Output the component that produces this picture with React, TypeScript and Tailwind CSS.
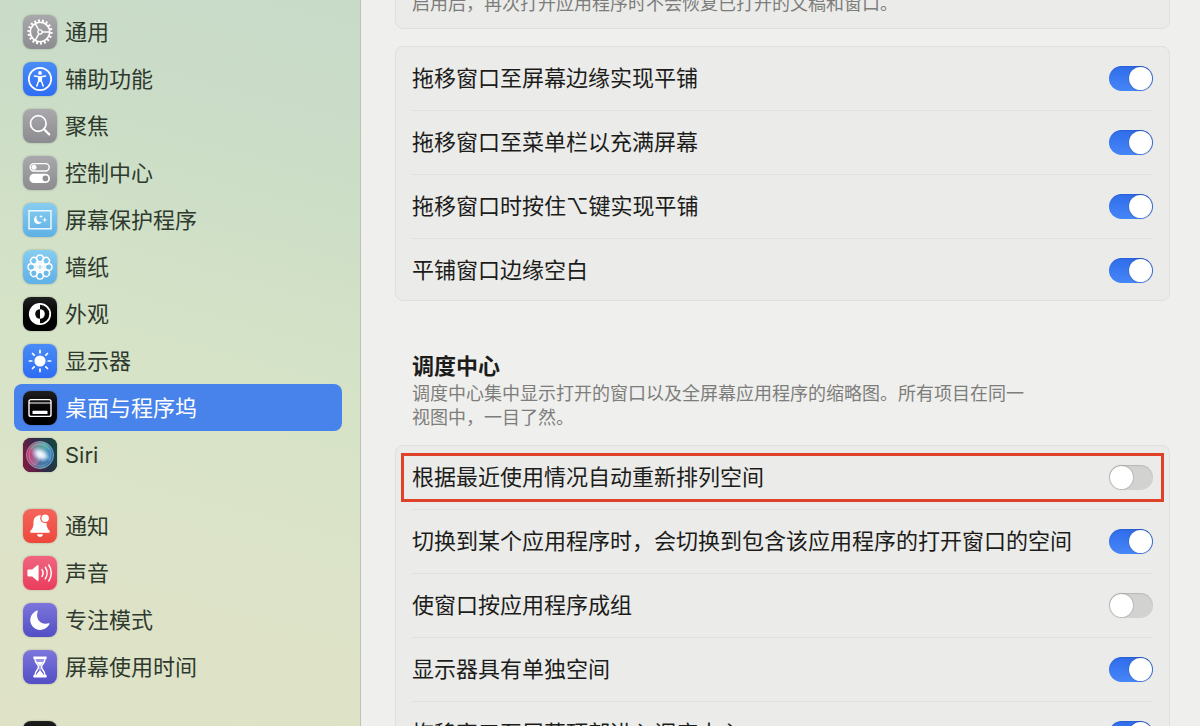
import { useState } from "react";
import type { ReactNode } from "react";

interface SidebarItem {
  label: string;
  tile: string;
  icon: ReactNode;
}

interface SettingRow {
  label: string;
  on: boolean;
  marked?: boolean;
}

/* =====================================
    Icons (drawn on a 34 x 34 tile)
===================================== */

const gear = (
  <g fill="none" stroke="#fff">
    <circle cx="17" cy="17" r="11.4" strokeWidth="2.4" pathLength="36" strokeDasharray="1 1" />
    <circle cx="17" cy="17" r="9.7" strokeWidth="1.6" />
    <circle cx="17" cy="17" r="2.1" strokeWidth="1.3" />
    <path d="M19.1 17H26.5M15.9 15.2L12.2 8.7M15.9 18.8L12.2 25.3" strokeWidth="1.5" />
  </g>
);

const accessibility = (
  <g>
    <circle cx="17" cy="17" r="11.2" fill="none" stroke="#fff" strokeWidth="1.7" />
    <circle cx="17" cy="11" r="1.9" fill="#fff" />
    <path
      d="M11.5 14.1L15.8 14.7V18.4L13.8 24M22.5 14.1L18.2 14.7V18.4L20.2 24"
      fill="none"
      stroke="#fff"
      strokeWidth="1.5"
      strokeLinecap="round"
      strokeLinejoin="round"
    />
    <path d="M15.2 14.2h3.6v5.6h-3.6z" fill="#fff" />
  </g>
);

const search = (
  <g fill="none" stroke="#fff" strokeLinecap="round">
    <circle cx="15.3" cy="14.5" r="7.8" strokeWidth="1.7" />
    <path d="M21 20.2L26.2 25.4" strokeWidth="2.3" />
  </g>
);

const controlCenter = (
  <g>
    <rect x="7.2" y="7.6" width="19" height="7.4" rx="3.7" fill="none" stroke="#fff" strokeWidth="1.4" />
    <circle cx="11" cy="11.3" r="2.5" fill="#fff" />
    <rect x="6.4" y="17.8" width="20.6" height="9.2" rx="4.6" fill="#fff" />
    <circle cx="22.4" cy="22.4" r="2.8" fill="#8f8f94" />
  </g>
);

const screenSaver = (
  <g>
    <rect x="6" y="7.8" width="22" height="18" fill="none" stroke="#fff" strokeWidth="1.3" />
    <path d="M14 12.6a4.3 4.3 0 1 0 5 6.2a4.2 4.2 0 0 1-5-6.2z" fill="#fff" />
    <path d="M18 11.6l.5 1.5l1.5.5l-1.5.5l-.5 1.5l-.5-1.5l-1.5-.5l1.5-.5z" fill="#fff" />
    <path d="M21.7 14.2l.7 2l2 .7l-2 .7l-.7 2l-.7-2l-2-.7l2-.7z" fill="#fff" />
  </g>
);

const spokes = [0, 45, 90, 135, 180, 225, 270, 315];

const flower = (
  <g fill="none" stroke="#fff" strokeWidth="1.4">
    {spokes.map((angle) => (
      <g key={angle} transform={`rotate(${angle} 17 17)`}>
        <circle cx="17" cy="8.3" r="3.3" />
        <path d="M15.2 10.9L17 15L18.8 10.9" />
      </g>
    ))}
    <circle cx="17" cy="17" r="3.9" strokeWidth="1" />
  </g>
);

const appearance = (
  <g>
    <circle cx="17" cy="17" r="10.2" fill="none" stroke="#fff" strokeWidth="1.8" />
    <path d="M17 6.5a10.5 10.5 0 0 0 0 21z" fill="#fff" />
    <path d="M17 12.2a4.8 4.8 0 0 0 0 9.6z" fill="#0b0b0b" />
    <path d="M17 12.2a4.8 4.8 0 0 1 0 9.6z" fill="#fff" />
  </g>
);

const sun = (
  <g>
    <circle cx="17" cy="17" r="5.6" fill="#fff" />
    {spokes.map((angle) => (
      <path
        key={angle}
        d="M17 8.8V6.4"
        transform={`rotate(${angle} 17 17)`}
        stroke="#fff"
        strokeWidth="1.7"
        strokeLinecap="round"
      />
    ))}
  </g>
);

const dock = (
  <g>
    <rect x="6" y="8.6" width="22" height="16.8" rx="2" fill="none" stroke="#fff" strokeWidth="1.4" />
    <path d="M6 12H28" stroke="#fff" strokeWidth="1.2" />
    <rect x="9.5" y="19.8" width="15" height="3.2" rx="0.6" fill="#fff" />
  </g>
);

const siri = (
  <g>
    <defs>
      <linearGradient id="siri-bg" x1="0" y1="0.6" x2="1" y2="0.3">
        <stop offset="0" stopColor="#7d1a42" />
        <stop offset="0.5" stopColor="#2f2a4a" />
        <stop offset="1" stopColor="#14473f" />
      </linearGradient>
      <linearGradient id="siri-orb" x1="0" y1="0.5" x2="1" y2="0.6">
        <stop offset="0" stopColor="#cc2f68" />
        <stop offset="0.35" stopColor="#9a6f98" />
        <stop offset="0.65" stopColor="#5aa5b4" />
        <stop offset="1" stopColor="#2d6cb8" />
      </linearGradient>
      <radialGradient id="siri-glow">
        <stop offset="0" stopColor="#fff" />
        <stop offset="0.4" stopColor="#e8f3ff" stopOpacity="0.85" />
        <stop offset="1" stopColor="#bcd7ff" stopOpacity="0" />
      </radialGradient>
    </defs>
    <rect width="34" height="34" fill="url(#siri-bg)" />
    <circle cx="17" cy="17" r="13.6" fill="url(#siri-orb)" stroke="#9dbcc0" strokeOpacity="0.7" strokeWidth="0.9" />
    <path d="M6 11C11 3 23 3 28 12C23 9 18 12 17 17C14 12 10 10 6 11z" fill="#4fb59a" fillOpacity="0.45" />
    <path d="M17 19C22 19 26 21 27 24C23 30 16 31 11 28C15 26 18 23 17 19z" fill="#1f3f8c" fillOpacity="0.4" />
    <circle cx="17" cy="17" r="11" fill="none" stroke="#c9dfe2" strokeOpacity="0.4" strokeWidth="0.8" />
    <ellipse cx="17.6" cy="16.6" rx="10.5" ry="7" fill="url(#siri-glow)" transform="rotate(30 17.6 16.6)" />
  </g>
);

const bell = (
  <g>
    <path
      d="M16.8 6.2c-4.3.3-6.3 3.3-6.3 7.2c0 4.4-1 6.4-3 8.3c-.8.8-.5 2 .7 2h17.6c1.2 0 1.5-1.2.7-2c-2-1.9-3-3.9-3-8.3c0-4-2-6.9-6.7-7.2z"
      fill="#fff"
    />
    <path d="M14 25.3h6c-.3 1.7-1.4 2.7-3 2.7s-2.7-1-3-2.7z" fill="#fff" />
    <circle cx="22.2" cy="9.3" r="5" fill="#f3584f" />
    <circle cx="22.2" cy="9.3" r="3.7" fill="#fff" />
  </g>
);

const speaker = (
  <g>
    <path
      d="M5.6 13.6h3.6l5-4.3c.7-.6 1.4-.3 1.4.6v14.2c0 .9-.7 1.2-1.4.6l-5-4.3H5.6c-.7 0-1.2-.5-1.2-1.2v-4.4c0-.7.5-1.2 1.2-1.2z"
      fill="#fff"
    />
    <path
      d="M19 13.6c1.3 2 1.3 4.8 0 6.8M22.3 11.3c2.3 3.3 2.3 8.1 0 11.4M25.8 9c3.3 4.7 3.3 11.3 0 16"
      fill="none"
      stroke="#fff"
      strokeWidth="1.5"
      strokeLinecap="round"
    />
  </g>
);

const moon = (
  <path
    d="M14 7.6c.5-.4 1 0 .8.6c-2.800 7.600 2.600 14 10.800 12.100c.7-.2 1.100.4.8 1c-3.600 6.600-12.600 7.500-17 1.900c-4-5.200-2.200-12.700 4.600-15.600z"
    fill="#fff"
  />
);

const hourglass = (
  <g>
    <path d="M10.4 6.6h13.2v2.3h-13.2zM10.4 25.1h13.2v2.3h-13.2z" fill="#fff" />
    <path
      d="M12 9c0 4 3.5 5.2 3.5 8s-3.5 4-3.5 8M22 9c0 4-3.5 5.2-3.5 8s3.5 4 3.5 8"
      fill="none"
      stroke="#fff"
      strokeWidth="1.5"
    />
    <path d="M12.4 9h9.2c-.2 1.2-.8 2.2-1.6 3h-6c-.8-.8-1.4-1.8-1.6-3z" fill="#fff" fillOpacity="0.3" />
    <path d="M13.8 12h6.4L17.4 16v4.6l3.6 4.4h-8l3.6-4.4V16z" fill="#fff" />
  </g>
);

const lock = (
  <g>
    <path d="M12.5 15V11a4.5 4.5 0 0 1 9 0v4" fill="none" stroke="#fff" strokeWidth="2" />
    <rect x="10" y="15" width="14" height="11" rx="2" fill="#fff" />
  </g>
);

/* =====================================
    Data
===================================== */

const grayTile = "bg-linear-to-b from-[#a9a8ac] to-[#8c8b90]";
const blueTile = "bg-linear-to-b from-[#4a8cf6] to-[#2f6cf4]";
const skyTile = "bg-linear-to-b from-[#86cdf0] to-[#5fb0e6]";
const blackTile = "bg-linear-to-b from-[#1f1f20] to-[#000000]";
const violetTile = "bg-linear-to-b from-[#7c76dc] to-[#534ec4]";

const sidebarGroups: SidebarItem[][] = [
  [
    { label: "通用", tile: grayTile, icon: gear },
    { label: "辅助功能", tile: blueTile, icon: accessibility },
    { label: "聚焦", tile: grayTile, icon: search },
    { label: "控制中心", tile: grayTile, icon: controlCenter },
    { label: "屏幕保护程序", tile: skyTile, icon: screenSaver },
    { label: "墙纸", tile: skyTile, icon: flower },
    { label: "外观", tile: blackTile, icon: appearance },
    { label: "显示器", tile: blueTile, icon: sun },
    { label: "桌面与程序坞", tile: blackTile, icon: dock },
    { label: "Siri", tile: blackTile, icon: siri },
  ],
  [
    { label: "通知", tile: "bg-linear-to-b from-[#f4655c] to-[#ee473b]", icon: bell },
    { label: "声音", tile: "bg-linear-to-b from-[#f0647f] to-[#ea3c5c]", icon: speaker },
    { label: "专注模式", tile: violetTile, icon: moon },
    { label: "屏幕使用时间", tile: violetTile, icon: hourglass },
  ],
  [{ label: "锁定屏幕", tile: blackTile, icon: lock }],
];

const windowRows: SettingRow[] = [
  { label: "拖移窗口至屏幕边缘实现平铺", on: true },
  { label: "拖移窗口至菜单栏以充满屏幕", on: true },
  { label: "拖移窗口时按住⌥键实现平铺", on: true },
  { label: "平铺窗口边缘空白", on: true },
];

const missionRows: SettingRow[] = [
  { label: "根据最近使用情况自动重新排列空间", on: false, marked: true },
  { label: "切换到某个应用程序时，会切换到包含该应用程序的打开窗口的空间", on: true },
  { label: "使窗口按应用程序成组", on: false },
  { label: "显示器具有单独空间", on: true },
  { label: "拖移窗口至屏幕顶部进入调度中心", on: true },
];

/* =====================================
    Parts
===================================== */

function SidebarLink({ item, active, onSelect }: { item: SidebarItem; active: boolean; onSelect: () => void }) {
  return (
    <li>
      <button
        type="button"
        onClick={onSelect}
        aria-current={active ? "page" : undefined}
        className={`flex h-[47px] w-full items-center gap-2 rounded-lg pl-[9px] text-left text-[22px] leading-7 ${
          active ? "bg-[#4883ec] text-white" : "text-[#2f3a2f]"
        }`}
      >
        <span className={`size-[34px] shrink-0 overflow-hidden rounded-lg shadow-[0_0_2px_rgba(0,0,0,0.3)] ${item.tile}`}>
          <svg viewBox="0 0 34 34" className="size-full" aria-hidden="true">
            {item.icon}
          </svg>
        </span>
        {item.label}
      </button>
    </li>
  );
}

function SwitchRow({ row }: { row: SettingRow }) {
  const [on, setOn] = useState(row.on);

  return (
    <label className="relative flex items-center justify-between border-b border-[#dfdfdd] py-[19px] last:border-b-0 last:pb-[17px]">
      <span className="text-[22px] leading-[25px] text-[#1c1c1b]">{row.label}</span>

      <span className="flex shrink-0">
        <input
          type="checkbox"
          role="switch"
          checked={on}
          onChange={() => setOn(!on)}
          className="peer sr-only"
        />
        <span className="flex h-[25px] w-11 items-center rounded-full bg-[#d2d2d0] px-px shadow-[inset_0_1px_1px_rgba(0,0,0,0.12)] peer-checked:justify-end peer-checked:bg-linear-to-b peer-checked:from-[#2f6cec] peer-checked:to-[#4686f6]">
          <span className="size-[23px] rounded-full bg-white shadow-[0_0_2px_rgba(0,0,0,0.35)]" />
        </span>
      </span>

      {row.marked && (
        <span className="pointer-events-none absolute -inset-x-[11px] inset-y-[7px] border-3 border-[#df4229]" />
      )}
    </label>
  );
}

function SettingsCard({ rows }: { rows: SettingRow[] }) {
  return (
    <div className="rounded-lg border border-[#e0e0de] bg-[#ebebe9] px-4">
      {rows.map((row) => (
        <SwitchRow key={row.label} row={row} />
      ))}
    </div>
  );
}

export default function App() {
  const [selected, setSelected] = useState("桌面与程序坞");

  return (
    <div className="flex h-screen overflow-hidden bg-[#efefed] font-['Inter','Noto_Sans_CJK_SC',sans-serif]">

      {/* Sidebar */}
      <nav className="w-[361px] shrink-0 overflow-hidden border-r border-[#b9c4b4] bg-linear-[195deg,#c8dbc9_0%,#cbddc7_20%,#d6e3c7_50%,#dde3c8_75%,#dfe2c6_100%] pt-2 pr-[18px] pl-3.5">
        <div className="flex flex-col gap-6">
          {sidebarGroups.map((group) => (
            <ul key={group[0].label}>
              {group.map((item) => (
                <SidebarLink
                  key={item.label}
                  item={item}
                  active={item.label === selected}
                  onSelect={() => setSelected(item.label)}
                />
              ))}
            </ul>
          ))}
        </div>
      </nav>

      {/* Settings, scrolled part of the way down */}
      <main className="min-w-0 flex-1 overflow-hidden pr-[30px] pl-[34px]">
        <div className="-mt-[21px] rounded-lg border border-[#e0e0de] bg-[#ebebe9] px-4 py-3">
          <p className="text-[18px] leading-6 text-[#7d7d7b]">
            启用后，再次打开应用程序时不会恢复已打开的文稿和窗口。
          </p>
        </div>

        <div className="mt-[17px]">
          <SettingsCard rows={windowRows} />
        </div>

        <section className="mt-[51px]">
          <div className="px-[17px]">
            <h2 className="text-[22px] leading-7 font-bold text-[#1c1c1b]">调度中心</h2>
            <p className="mt-0.5 mb-[15px] max-w-[620px] text-[18px] leading-6 text-[#7d7d7b]">
              调度中心集中显示打开的窗口以及全屏幕应用程序的缩略图。所有项目在同一视图中，一目了然。
            </p>
          </div>
          <SettingsCard rows={missionRows} />
        </section>
      </main>

    </div>
  );
}
